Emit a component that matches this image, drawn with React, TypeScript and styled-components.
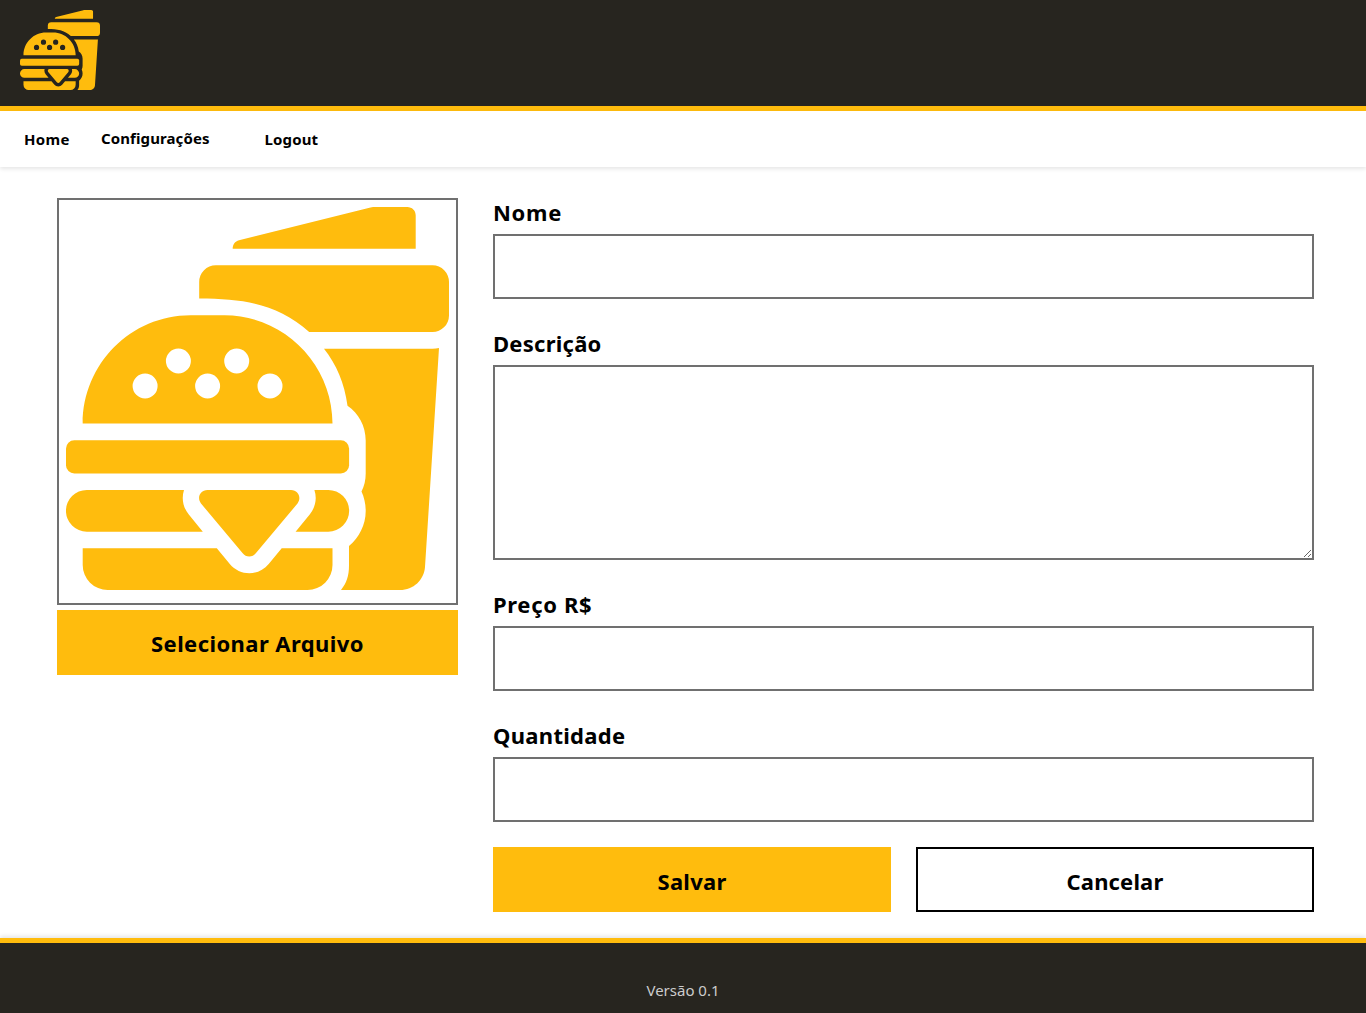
import React from "react";
import styled, { createGlobalStyle } from "styled-components";

const YELLOW = "#ffbc0d";
const DARK = "#27251f";
const GREY = "#707070";

const GlobalStyle = createGlobalStyle`
  *, *::before, *::after { box-sizing: border-box; }
  body {
    margin: 0;
    background: #fff;
    color: #000;
    font-family: "Noto Sans", "Open Sans", sans-serif;
  }
`;

const Page = styled.div`
  display: flex;
  flex-direction: column;
  min-height: 1013px;
`;

const Header = styled.header`
  height: 111px;
  padding: 10px 20px;
  background: ${DARK};
  border-bottom: 5px solid ${YELLOW};
`;

const Nav = styled.nav`
  display: flex;
  align-items: center;
  height: 56px;
  padding-left: 24px;
  box-shadow: 0 2px 4px rgba(0, 0, 0, 0.1);
`;

const NavLink = styled.a<{ $width: number; $lift?: number; $spacing?: number }>`
  width: ${(p) => p.$width}px;
  padding-bottom: ${(p) => p.$lift ?? 0}px;
  font-size: 15px;
  font-weight: 700;
  line-height: 20px;
  letter-spacing: ${(p) => p.$spacing ?? 0}px;
  white-space: nowrap;
  color: #000;
  text-decoration: none;
`;

const Main = styled.main`
  flex: 1;
  display: grid;
  grid-template-columns: 401px 821px;
  column-gap: 35px;
  align-items: start;
  padding: 31px 52px 26px 57px;
`;

const Picture = styled.section`
  display: flex;
  flex-direction: column;
  gap: 5px;
`;

const Frame = styled.div`
  height: 407px;
  padding: 7px;
  border: 2px solid ${GREY};
`;

const Art = styled.svg<{ $size: number }>`
  display: block;
  width: ${(p) => p.$size}px;
  height: ${(p) => p.$size}px;
  fill: ${YELLOW};
`;

const Button = styled.button<{ $outline?: boolean; $spacing?: number; $drop?: number }>`
  height: 65px;
  padding: ${(p) => p.$drop ?? 3}px 0 0;
  border: 2px solid ${(p) => (p.$outline ? "#000" : YELLOW)};
  border-radius: 0;
  background: ${(p) => (p.$outline ? "#fff" : YELLOW)};
  color: #000;
  font-family: inherit;
  font-size: 22px;
  font-weight: 700;
  letter-spacing: ${(p) => p.$spacing ?? 0}px;
`;

const Form = styled.form`
  display: flex;
  flex-direction: column;
  gap: 30px;
`;

const Field = styled.label`
  display: flex;
  flex-direction: column;
`;

const Caption = styled.span<{ $spacing?: number }>`
  height: 36px;
  font-size: 22px;
  font-weight: 700;
  line-height: 28px;
  letter-spacing: ${(p) => p.$spacing ?? 0}px;
`;

const Input = styled.input`
  height: 65px;
  padding: 0 12px;
  border: 2px solid ${GREY};
  border-radius: 0;
  font: inherit;
  font-size: 20px;
`;

const TextArea = styled.textarea`
  height: 195px;
  padding: 12px;
  border: 2px solid ${GREY};
  border-radius: 0;
  font: inherit;
  font-size: 20px;
  resize: both;
`;

const Actions = styled.div`
  display: grid;
  grid-template-columns: 1fr 1fr;
  column-gap: 25px;
  margin-top: -5px;
`;

const Footer = styled.footer`
  display: flex;
  justify-content: center;
  height: 75px;
  padding-top: 37px;
  background: ${DARK};
  border-top: 5px solid ${YELLOW};
  box-shadow: 0 -2px 4px rgba(0, 0, 0, 0.1);
`;

const Version = styled.span`
  font-size: 15px;
  line-height: 20px;
  color: #ccc;
`;

const Snack = ({ size }: { size: number }) => (
  <Art $size={size} viewBox="66 207 383 383" aria-hidden="true">
    <path d="M232.7 248.8H415.7V215.5C415.7 210.5 412 207 407.3 207H374.5C372.5 207 371 207.4 369.5 207.8L239 240.2C235 241.3 232.7 244.5 232.7 248.8Z" />
    <path d="M215.8 265.3H432.5A16.6 16.6 0 0 1 449 282V315.3A16.6 16.6 0 0 1 432.5 332H309.2C278 304.5 245 298.5 199.2 298.5V282A16.6 16.6 0 0 1 215.8 265.3Z" />
    <path d="M324 348.7H432.5Q436 348.7 439 347.9L425 567C424 580 413.5 590 400 590H341C346.5 583 349 576 349 565.5V546C359 537.5 365.7 525 365.7 511C365.7 504 364.2 497.5 361.5 491.5C364.3 486 365.7 480 365.7 473.5V440.5C365.7 426 358.5 413 347.5 405.7C344.5 383 336.5 364.5 324 348.7Z" />
    <path
      fillRule="evenodd"
      d="M82.7 423.6C82.7 364 131 315.3 190.5 315.3H224.5C284 315.3 332.5 364 332.5 423.6Z
        M165.9 361a12.5 12.5 0 1 0 25 0a12.5 12.5 0 1 0 -25 0Z
        M224.2 361a12.5 12.5 0 1 0 25 0a12.5 12.5 0 1 0 -25 0Z
        M132.6 386a12.5 12.5 0 1 0 25 0a12.5 12.5 0 1 0 -25 0Z
        M195.1 386a12.5 12.5 0 1 0 25 0a12.5 12.5 0 1 0 -25 0Z
        M257.5 386a12.5 12.5 0 1 0 25 0a12.5 12.5 0 1 0 -25 0Z"
    />
    <rect x="66" y="440.3" width="283.1" height="33.2" rx="8.3" />
    <path d="M86.8 490H184C181.3 498.5 183 507.5 188.8 514.5L202.8 531.7H86.8A20.85 20.85 0 0 1 86.8 490Z" />
    <path d="M314.4 490H328.3A20.85 20.85 0 0 1 328.3 531.7H295.6L309.7 514.5C315.5 507.5 317.2 498.5 314.4 490Z" />
    <path d="M207.5 490H291C298.5 490 301.7 498 297.5 503.5L256 553C252.5 557.7 246 557.7 242.5 553L201 503.5C196.7 498 200 490 207.5 490Z" />
    <path d="M82.7 548.3H216.8L229.8 563.9C240 576.2 258.5 576.2 268.7 563.9L281.7 548.3H332.5V565A25 25 0 0 1 307.5 590H107.7A25 25 0 0 1 82.7 565Z" />
  </Art>
);

export default function App() {
  return (
    <Page>
      <GlobalStyle />
      <Header>
        <Snack size={80} />
      </Header>
      <Nav>
        <NavLink $width={77} $spacing={0.3}>Home</NavLink>
        <NavLink $width={163.5} $lift={2} $spacing={0.1}>Configurações</NavLink>
        <NavLink $width={60} $spacing={0.15}>Logout</NavLink>
      </Nav>
      <Main>
        <Picture>
          <Frame>
            <Snack size={383} />
          </Frame>
          <Button type="button" $drop={1} $spacing={0.42}>Selecionar Arquivo</Button>
        </Picture>
        <Form>
          <Field>
            <Caption $spacing={0.7}>Nome</Caption>
            <Input />
          </Field>
          <Field>
            <Caption $spacing={0.25}>Descrição</Caption>
            <TextArea />
          </Field>
          <Field>
            <Caption $spacing={0.65}>Preço R$</Caption>
            <Input />
          </Field>
          <Field>
            <Caption $spacing={0.3}>Quantidade</Caption>
            <Input />
          </Field>
          <Actions>
            <Button type="button" $spacing={0.25}>Salvar</Button>
            <Button type="button" $outline $spacing={0.15}>Cancelar</Button>
          </Actions>
        </Form>
      </Main>
      <Footer>
        <Version>Versão 0.1</Version>
      </Footer>
    </Page>
  );
}
